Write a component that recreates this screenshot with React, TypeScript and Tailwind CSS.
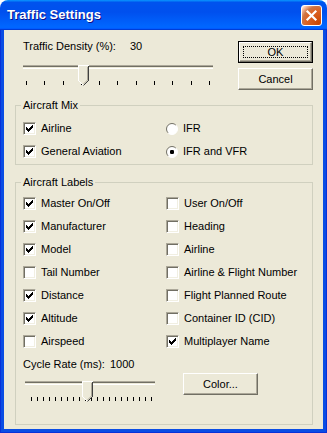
import React from "react"

const font = "font-['Liberation_Sans',Arial,sans-serif]"

const CheckMark = () => (
    <svg width="7" height="7" viewBox="0 0 7 7" shapeRendering="crispEdges">
        {[2, 3, 4, 3, 2, 1, 0].map((y, x) => (
            <rect key={x} x={x} y={y} width="1" height="3" fill="#000" />
        ))}
    </svg>
)

const Checkbox = ({ checked, label }: { checked?: boolean; label: string }) => (
    <div className="flex items-center h-[23px]">
        <span className="w-[13px] h-[13px] shrink-0 bg-white border border-t-[#aca899] border-l-[#aca899] border-b-white border-r-white shadow-[inset_1px_1px_0_#716f64,inset_-1px_-1px_0_#f1efe2] flex items-center justify-center">
            {checked && <CheckMark />}
        </span>
        <span className="ml-[5px] leading-[13px]">{label}</span>
    </div>
)

const Radio = ({ checked, label }: { checked?: boolean; label: string }) => (
    <div className="flex items-center h-[23px]">
        <svg width="12" height="12" viewBox="0 0 12 12" className="shrink-0">
            <defs>
                <linearGradient id={`rg-${checked ? "on" : "off"}`} x1="0" y1="0" x2="1" y2="1">
                    <stop offset="0.45" stopColor="#716f64" />
                    <stop offset="0.55" stopColor="#ffffff" />
                </linearGradient>
            </defs>
            <circle cx="6" cy="6" r="5.5" fill="#fff" stroke={`url(#rg-${checked ? "on" : "off"})`} strokeWidth="1" />
            {checked && <rect x="4" y="4" width="4" height="4" rx="1.2" fill="#000" />}
        </svg>
        <span className="ml-[5px] leading-[13px]">{label}</span>
    </div>
)

const Thumb = () => (
    <svg width="11" height="21" viewBox="0 0 11 21" shapeRendering="crispEdges">
        <polygon points="0,0 11,0 11,16 5.5,21 0,16" fill="#ece9d8" />
        <polyline points="0.5,16 0.5,0.5 10.5,0.5" fill="none" stroke="#fff" />
        <line x1="0.5" y1="15.5" x2="5.5" y2="20.5" stroke="#fff" shapeRendering="auto" />
        <polyline points="10.5,0.5 10.5,15.5" fill="none" stroke="#404040" />
        <line x1="10.5" y1="15.5" x2="5.5" y2="20.5" stroke="#404040" shapeRendering="auto" />
        <polyline points="9.5,1.5 9.5,15" fill="none" stroke="#aca899" />
        <line x1="9.5" y1="15" x2="5.5" y2="19" stroke="#aca899" shapeRendering="auto" />
    </svg>
)

const Slider = ({ width, ticks, thumbLeft, padL, padR }: { width: number; ticks: number; thumbLeft: number; padL: number; padR: number }) => (
    <div className="relative h-[29px]" style={{ width }}>
        <div className="mt-[6px] h-[4px] border-t border-b border-t-[#aca899] border-b-white shadow-[inset_0_1px_0_#716f64]" />
        <div className="mt-[12px] h-[4px] flex justify-between" style={{ paddingLeft: padL, paddingRight: padR }}>
            {Array.from({ length: ticks }).map((_, i) => (
                <span key={i} className="w-px h-[4px] bg-black" />
            ))}
        </div>
        <div className="absolute top-0" style={{ left: thumbLeft }}>
            <Thumb />
        </div>
    </div>
)

const Button = ({ label, isDefault }: { label: string; isDefault?: boolean }) => (
    <div className={`w-[75px] h-[22px] ${isDefault ? "border border-black" : ""}`}>
        <div className="w-full h-full bg-[#ece9d8] border border-t-white border-l-white border-b-[#716f64] border-r-[#716f64] shadow-[inset_-1px_-1px_0_#aca899] flex items-center justify-center relative">
            {isDefault && <div className="absolute inset-[3px] border border-dotted border-black" />}
            <span className="leading-[13px]">{label}</span>
        </div>
    </div>
)

const GroupBox = ({ title, className, children }: { title: string; className: string; children: React.ReactNode }) => (
    <div className={`relative ml-[11px] w-[298px] border border-[#d0d0bf] ${className}`}>
        <span className="absolute -top-[7px] left-[5px] px-[2px] leading-[13px] bg-[#ece9d8]">{title}</span>
        {children}
    </div>
)

export default function App() {
    return (
        <div className={`w-[327px] h-[433px] flex flex-col text-[11px] text-black ${font}`}>
            {/* title bar */}
            <div className="h-[30px] shrink-0 flex items-center justify-between pl-[7px] pr-[5px] rounded-t-[8px] bg-[linear-gradient(180deg,#0997ff,#0053ee_8%,#0050ee_40%,#0066ff_88%,#0066ff_93%,#005bff_95%,#003dd7_96%,#003dd7)]">
                <span className="text-white font-bold text-[13px] leading-[16px] [text-shadow:1px_1px_#0f1089] mt-[-1px]">Traffic Settings</span>
                <div className="w-[21px] h-[21px] rounded-[3px] border border-white bg-[radial-gradient(circle_at_90%_90%,#cc4600_0%,#dc6527_55%,#cd7546_70%,#ffccb2_90%,#fff_100%)] flex items-center justify-center">
                    <svg width="13" height="13" viewBox="0 0 13 13">
                        <path d="M2.5 2.5 L10.5 10.5 M10.5 2.5 L2.5 10.5" stroke="#fff" strokeWidth="2.2" strokeLinecap="square" />
                    </svg>
                </div>
            </div>

            {/* frame */}
            <div className="flex-1 flex bg-[#0a4de4] border-x border-b border-[#0831d9] px-[3px] pb-[3px]">
                <div className="flex-1 bg-[#ece9d8] flex flex-col">
                    {/* density + buttons */}
                    <div className="flex pt-[10px] h-[60px] shrink-0">
                        <div className="ml-[19px] w-[190px] flex flex-col">
                            <div className="flex h-[13px] leading-[13px]">
                                <span className="w-[107px]">Traffic Density (%):</span>
                                <span>30</span>
                            </div>
                            <div className="mt-[6px]">
                                <Slider width={190} ticks={11} thumbLeft={55} padL={3} padR={3} />
                            </div>
                        </div>
                        <div className="ml-[25px] mt-[1px] flex flex-col gap-[5px]">
                            <Button label="OK" isDefault />
                            <Button label="Cancel" />
                        </div>
                    </div>

                    {/* Aircraft Mix */}
                    <GroupBox title="Aircraft Mix" className="mt-[15px]">
                        <div className="grid grid-cols-[143px_1fr] pl-[7px] pt-[11px] pb-[1px]">
                            <Checkbox checked label="Airline" />
                            <Radio label="IFR" />
                            <Checkbox checked label="General Aviation" />
                            <Radio checked label="IFR and VFR" />
                        </div>
                    </GroupBox>

                    {/* Aircraft Labels */}
                    <GroupBox title="Aircraft Labels" className="mt-[17px]">
                        <div className="pl-[7px] pt-[9px] pb-[14px]">
                            <div className="grid grid-cols-[143px_1fr]">
                                <Checkbox checked label="Master On/Off" />
                                <Checkbox label="User On/Off" />
                                <Checkbox checked label="Manufacturer" />
                                <Checkbox label="Heading" />
                                <Checkbox checked label="Model" />
                                <Checkbox label="Airline" />
                                <Checkbox label="Tail Number" />
                                <Checkbox label="Airline & Flight Number" />
                                <Checkbox checked label="Distance" />
                                <Checkbox label="Flight Planned Route" />
                                <Checkbox checked label="Altitude" />
                                <Checkbox label="Container ID (CID)" />
                                <Checkbox label="Airspeed" />
                                <Checkbox checked label="Multiplayer Name" />
                            </div>
                            <div className="flex h-[13px] leading-[13px] mt-[5px]">
                                <span className="w-[87px]">Cycle Rate (ms):</span>
                                <span>1000</span>
                            </div>
                            <div className="flex mt-[2px]">
                                <div className="ml-[2px] mt-[2px]">
                                    <Slider width={130} ticks={21} thumbLeft={57} padL={6} padR={3} />
                                </div>
                                <div className="ml-[28px]">
                                    <Button label="Color..." />
                                </div>
                            </div>
                        </div>
                    </GroupBox>
                </div>
            </div>
        </div>
    )
}
